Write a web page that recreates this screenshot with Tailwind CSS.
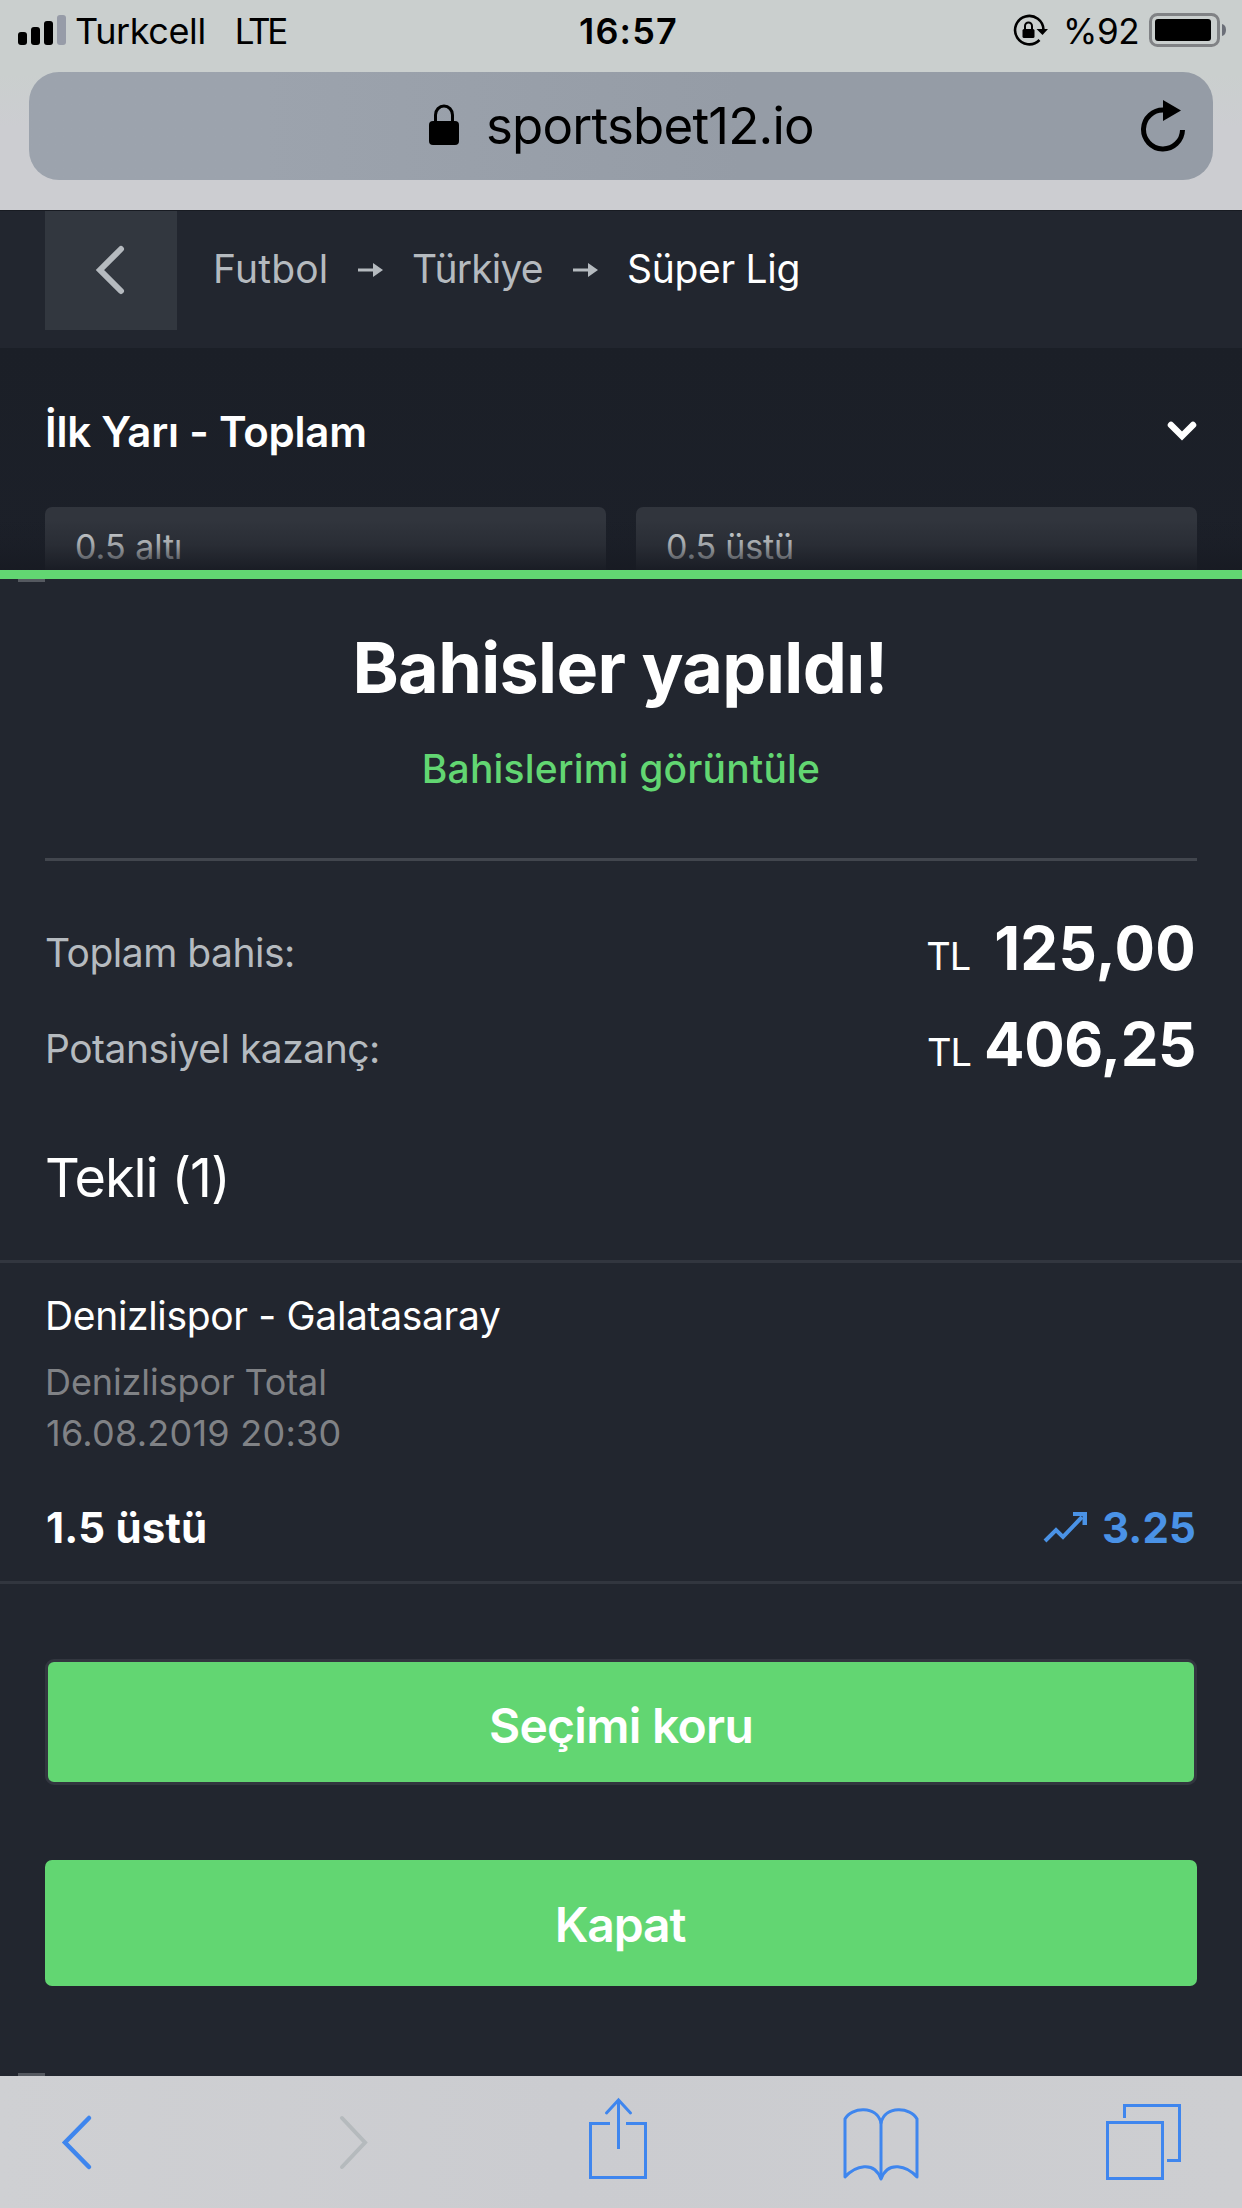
<!DOCTYPE html>
<html lang="tr">
<head>
<meta charset="utf-8">
<title>Bahisler yapıldı!</title>
<script src="https://cdn.jsdelivr.net/npm/@tailwindcss/browser@4"></script>
</head>
<body class="w-[1242px] h-[2208px] overflow-hidden bg-[#22262f] font-['Inter','Liberation_Sans',sans-serif] text-white whitespace-nowrap">
<div class="flex flex-col w-[1242px] h-[2208px]">

  <!-- Browser chrome: status bar and address field -->
  <header class="h-[210px] shrink-0 bg-linear-to-b from-[#cacfce] from-35% to-[#cccdd1] to-60% text-black">
    <div class="h-[72px] grid grid-cols-[1fr_auto_1fr] text-[36px] leading-[62px]">
      <div class="flex pl-[18px]">
        <svg class="w-[50px] h-[62px]" viewBox="0 0 50 62"><rect x="0" y="32" width="9" height="13" rx="3"/><rect x="13" y="27" width="9" height="18" rx="3"/><rect x="26" y="21" width="9" height="24" rx="3"/><rect x="39" y="15" width="9" height="30" rx="3" fill="#979ca8"/></svg>
        <span class="ml-[7px] tracking-[-0.4px]">Turkcell</span>
        <span class="ml-[29px] text-[35px] tracking-[-3.2px]">LTE</span>
      </div>
      <div class="pl-[15px] font-semibold tracking-[1.16px]">16:57</div>
      <div class="flex justify-end pr-[14px]">
        <svg class="w-[36px] h-[62px]" viewBox="0 0 36 62"><path d="M30.500 30A14.200 14.200 0 1 0 26.500 40" fill="none" stroke="#000" stroke-width="2.600"/><path d="M23.500 29h11.500l-5.500 6z"/><rect x="9.500" y="29" width="12" height="9" rx="1.500"/><path d="M12 30v-4a3.500 3.500 0 0 1 7 0v4" fill="none" stroke="#000" stroke-width="2"/></svg>
        <span class="ml-[14px] text-[35px] tracking-[-0.5px]">%92</span>
        <svg class="ml-[9px] w-[80px] h-[62px]" viewBox="0 0 80 62"><rect x="2.500" y="14.500" width="68" height="31" rx="7" fill="none" stroke="#808285" stroke-width="3"/><rect x="7" y="19" width="56" height="22" rx="3"/><path d="M74 24q4 1 4 6t-4 6z" fill="#6b6f78"/></svg>
      </div>
    </div>
    <div class="mx-[29px] h-[108px] w-[1184px] rounded-[30px] bg-linear-to-r from-[#9ca3ad] from-20% to-[#959ca6] to-60% flex items-center justify-between pl-[400px] pr-[28px]">
      <div class="flex items-center">
        <svg class="-mt-[2px] w-[30px] h-[42px]" viewBox="0 0 30 42"><rect x="0" y="17" width="30" height="24" rx="4"/><path d="M6.500 18V11a8.500 9 0 0 1 17 0v7" fill="none" stroke="#000" stroke-width="3"/></svg>
        <span class="ml-[27px] text-[51px] leading-[108px] tracking-[-0.8px]">sportsbet12.io</span>
      </div>
      <svg class="w-[44px] h-[54px]" viewBox="0 0 44 54"><path d="M41.500 31A19.500 19.500 0 1 1 23 11" fill="none" stroke="#000" stroke-width="5"/><path d="M22 1l18 10.500L22 22z"/></svg>
    </div>
  </header>

  <!-- Breadcrumb -->
  <nav class="h-[138px] shrink-0 flex items-start border-t border-[#181b22] bg-[#22262f] text-[39px] leading-[116px] text-[#b5babf]">
    <div class="ml-[45px] w-[132px] h-[119px] bg-[#32373f] flex items-center justify-center">
      <svg class="-mt-px mr-[3px] w-[32px] h-[50px]" viewBox="0 0 32 50"><path d="M27 4L6 25l21 21" fill="none" stroke="#b5babf" stroke-width="6" stroke-linecap="round"/></svg>
    </div>
    <span class="ml-[36px] w-[145px] tracking-[0.2px]">Futbol</span>
    <svg class="w-[25px] h-[118px]" viewBox="0 0 25 118"><path d="M0 59h18" stroke="#b5babf" stroke-width="3"/><path d="M15 52l10 7-10 7z" fill="#b5babf"/></svg>
    <span class="ml-[29px] w-[161px] tracking-[-0.8px]">Türkiye</span>
    <svg class="w-[25px] h-[118px]" viewBox="0 0 25 118"><path d="M0 59h18" stroke="#b5babf" stroke-width="3"/><path d="M15 52l10 7-10 7z" fill="#b5babf"/></svg>
    <span class="ml-[29px] text-white tracking-[-0.3px]">Süper Lig</span>
  </nav>

  <!-- Market section, partly covered by the bet sheet -->
  <section class="h-[222px] shrink-0 relative overflow-hidden bg-linear-to-b from-[#1b1f27] to-[#1c2029]">
    <div class="flex items-center justify-between pt-[54px] pl-[45px] pr-[43px]">
      <h2 class="text-[42px] leading-[60px] font-semibold tracking-[-0.2px]">İlk Yarı - Toplam</h2>
      <svg class="-mt-[3px] w-[34px] h-[24px]" viewBox="0 0 34 24"><path d="M6 6l11 11L28 6" fill="none" stroke="#fff" stroke-width="6.500" stroke-linecap="round"/></svg>
    </div>
    <div class="mt-[45px] px-[45px] grid grid-cols-2 gap-[30px] text-[34px] leading-[79px] text-[#dde0e2]">
      <div class="h-[90px] rounded-[7px] bg-[#31353d] pl-[30px]">0.5 altı</div>
      <div class="h-[90px] rounded-[7px] bg-[#31353d] pl-[30px] tracking-[-0.19px]">0.5 üstü</div>
    </div>
    <div class="absolute inset-x-0 bottom-0 h-[50px] bg-linear-to-b from-[#171a22]/0 via-[#171a22]/30 to-[#171a22]/90"></div>
  </section>

  <!-- Bet confirmation sheet -->
  <main class="h-[1506px] shrink-0 relative border-t-[9px] border-[#62d672] bg-[#22262f]">
    <div class="absolute left-[18px] top-0 w-[27px] h-[3px] bg-[#555960]"></div>
    <div class="absolute left-[18px] bottom-0 w-[27px] h-[3px] bg-[#555960]"></div>
    <h1 class="pt-[44px] pr-[2px] text-center text-[70px] leading-[90px] font-bold tracking-[-0.6px]">Bahisler yapıldı!</h1>
    <p class="mt-[31px] text-center text-[39px] leading-[50px] font-[550] tracking-[0.2px] text-[#62d672]">Bahislerimi görüntüle</p>
    <div class="mt-[64px] mx-[45px] h-[3px] bg-[#42464e]"></div>

    <div class="mt-[43px] px-[45px] text-[39px] leading-[97px]">
      <div class="h-[96px] flex justify-between items-start">
        <span class="text-[#b5babf] tracking-[-0.51px]">Toplam bahis:</span>
        <span class="flex items-baseline pr-[1px]"><span class="leading-none text-[38px] tracking-[-1px]">TL</span><span class="ml-[24px] text-[60px] leading-[88px] font-bold tracking-[0.33px]">125,00</span></span>
      </div>
      <div class="h-[96px] flex justify-between items-start">
        <span class="text-[#b5babf] tracking-[-0.49px]">Potansiyel kazanç:</span>
        <span class="flex items-baseline pr-[1px]"><span class="leading-none text-[38px] tracking-[-1px]">TL</span><span class="ml-[13px] text-[60px] leading-[88px] font-bold tracking-[-0.41px]">406,25</span></span>
      </div>
    </div>

    <h3 class="mt-[42px] pl-[45px] text-[54px] leading-[80px] tracking-[-1.1px]">Tekli (1)</h3>
    <div class="mt-[42px] h-[3px] bg-[#32363f]"></div>

    <div class="mt-[27px] px-[45px]">
      <div class="text-[39px] leading-[51px] tracking-[-0.33px]">Denizlispor - Galatasaray</div>
      <div class="mt-[16px] text-[36px] leading-[51px] text-[#808286] tracking-[-0.1px]">Denizlispor Total</div>
      <div class="pl-[1px] text-[36px] leading-[51px] text-[#808286] tracking-[0.25px]">16.08.2019 20:30</div>
      <div class="mt-[38px] h-[60px] pl-[1px] pr-[1px] flex items-center justify-between text-[42px] leading-[61px] font-bold">
        <span class="tracking-[0.2px]">1.5 üstü</span>
        <span class="flex items-center text-[#4a92e6]">
          <svg class="w-[44px] h-[32px]" viewBox="0 0 44 32"><path d="M2 30l11-11 7 7L39 6" fill="none" stroke="#4a92e6" stroke-width="4"/><path d="M30 1h14v13h-4.500V5H30z" fill="#4a92e6"/></svg>
          <span class="ml-[15px] font-[650] tracking-[0.1px]">3.25</span>
        </span>
      </div>
    </div>
    <div class="mt-[24px] h-[3px] bg-[#32363f]"></div>

    <div class="mt-[75px] px-[45px] text-center text-[48px] font-semibold">
      <div class="h-[126px] border-[3px] border-[#32363f] rounded-[9px] bg-[#62d672] leading-[128px] tracking-[-0.7px]">Seçimi koru</div>
      <div class="mt-[75px] pr-[2px] h-[126px] rounded-[7px] bg-[#62d672] leading-[129px] tracking-[-1.1px]">Kapat</div>
    </div>
  </main>

  <!-- Browser toolbar -->
  <footer class="h-[132px] shrink-0 flex items-start bg-linear-to-r from-[#cfd0d3] via-[#cbccd0] via-45% to-[#cdced1]">
    <svg class="ml-[60px] mt-[37px] w-[34px] h-[58px]" viewBox="0 0 34 58" fill="none" stroke="#3f86ee" stroke-width="4.500" stroke-linecap="round"><path d="M29 5L5 29.500 29 54"/></svg>
    <svg class="ml-[243px] mt-[37px] w-[34px] h-[58px]" viewBox="0 0 34 58" fill="none" stroke="#b5babd" stroke-width="4" stroke-linecap="round"><path d="M5 5l23 24.500L5 54"/></svg>
    <svg class="ml-[215px] mt-[19px] w-[64px] h-[86px]" viewBox="0 0 64 86" fill="none" stroke="#3f86ee" stroke-width="3"><path d="M24 28.500H4.500v54h55v-54H40"/><path d="M32.500 54V5"/><path d="M20.500 18L32.500 5l12 13" stroke-linecap="round"/></svg>
    <svg class="ml-[192px] mt-[30px] w-[78px] h-[76px]" viewBox="0 0 78 76" fill="none" stroke="#3f86ee" stroke-width="3" stroke-linejoin="round"><path d="M3 13C9 1 35 -1 39 17 43 -1 69 1 75 13V71C65 60 46 54 39 73 32 54 13 60 3 71z"/><path d="M39 16v57"/></svg>
    <svg class="ml-[184px] mt-[25px] w-[78px] h-[80px]" viewBox="0 0 78 80" fill="none" stroke="#3f86ee" stroke-width="3"><path d="M3.500 21.500h55v56h-55z"/><path d="M20.500 17V4.500h55v55H63"/></svg>
  </footer>
</div>
</body>
</html>
